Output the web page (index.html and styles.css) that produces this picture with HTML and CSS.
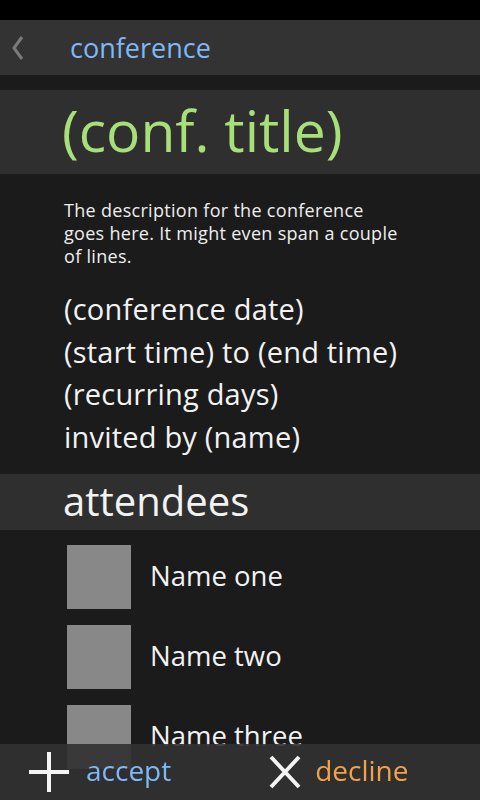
FILE: index.html
```html
<!DOCTYPE html>
<html lang="en">
<head>
<meta charset="utf-8">
<title>conference</title>
<link rel="stylesheet" href="styles.css">
</head>
<body>
<div class="status"></div>
<header class="topbar">
  <svg class="back" width="14" height="26" viewBox="0 0 14 26"><polyline points="11,2 3,13 11,24" fill="none" stroke="#7a7a7a" stroke-width="3"/></svg>
  <span class="topbar-title">conference</span>
</header>
<div class="title-bar"><h1 class="title">(conf. title)</h1></div>
<section class="details">
  <p class="desc">The description for the conference<br>goes here. It might even span a couple<br>of lines.</p>
  <ul class="info">
    <li>(conference date)</li>
    <li>(start time) to (end time)</li>
    <li>(recurring days)</li>
    <li>invited by (name)</li>
  </ul>
</section>
<div class="section-bar"><h2 class="section-title">attendees</h2></div>
<ul class="attendees">
  <li class="attendee"><span class="avatar"></span><span class="name">Name one</span></li>
  <li class="attendee"><span class="avatar"></span><span class="name">Name two</span></li>
  <li class="attendee"><span class="avatar"></span><span class="name">Name three</span></li>
</ul>
<nav class="actions">
  <div class="action accept">
    <svg class="icon" width="40" height="40" viewBox="0 0 40 40"><path d="M20 0V40M0 20H40" stroke="#f4f4f4" stroke-width="4"/></svg>
    <span>accept</span>
  </div>
  <div class="action decline">
    <svg class="icon" width="32" height="34" viewBox="0 0 32 34"><path d="M2 2L30 32M30 2L2 32" stroke="#f4f4f4" stroke-width="4"/></svg>
    <span>decline</span>
  </div>
</nav>
</body>
</html>
```
FILE: styles.css
```css
html, body {
  margin: 0;
  padding: 0;
  height: 800px;
  overflow: hidden;
  background: #1b1b1b;
  font-family: "Open Sans", "DejaVu Sans", sans-serif;
  color: #f2f2f2;
}
ul, p, h1, h2 { margin: 0; padding: 0; list-style: none; font-weight: normal; }

.status { height: 20px; background: #000; }

.topbar {
  height: 55px;
  background: #333333;
  display: flex;
  align-items: center;
}
.back { margin-left: 11px; }
.topbar-title {
  margin-left: 45px;
  font-size: 27px;
  color: #80b8f6;
  line-height: 1;
  padding-bottom: 1px;
}

.title-bar {
  margin-top: 15px;
  height: 84px;
  background: #2f2f2f;
  display: flex;
  align-items: center;
  padding-left: 62px;
}
.title {
  font-size: 57px;
  color: #a7df79;
  line-height: 1;
  padding-bottom: 4px;
}

.details { padding: 25px 0 16px 64px; }
.desc {
  font-size: 18px;
  line-height: 23px;
  color: #eeeeee;
  letter-spacing: 0.3px;
}
.info { margin-top: 20px; }
.info li {
  font-size: 29px;
  line-height: 42.5px;
  letter-spacing: 0.2px;
}

.section-bar {
  height: 56px;
  background: #2f2f2f;
  display: flex;
  align-items: center;
  padding-left: 63px;
}
.section-title {
  font-size: 40px;
  line-height: 1;
  padding-bottom: 3px;
}

.attendees {
  padding: 15px 0 0 67px;
  display: flex;
  flex-direction: column;
  gap: 16px;
}
.attendee {
  display: flex;
  align-items: center;
  height: 64px;
}
.avatar {
  width: 64px;
  height: 64px;
  background: #888888;
  flex: none;
}
.name {
  margin-left: 19px;
  font-size: 27.5px;
  padding-bottom: 3px;
}

.actions {
  position: fixed;
  left: 0;
  right: 0;
  bottom: 0;
  height: 56px;
  background: rgba(49, 49, 49, 0.91);
  display: flex;
  align-items: center;
}
.action {
  display: flex;
  align-items: center;
  font-size: 28px;
  line-height: 1;
}
.accept { margin-left: 29px; color: #80b8f6; }
.accept .icon { margin-right: 17px; }
.decline { margin-left: 98px; color: #f0a24a; }
.decline .icon { margin-right: 14px; }
.action span { padding-bottom: 4px; }
```
